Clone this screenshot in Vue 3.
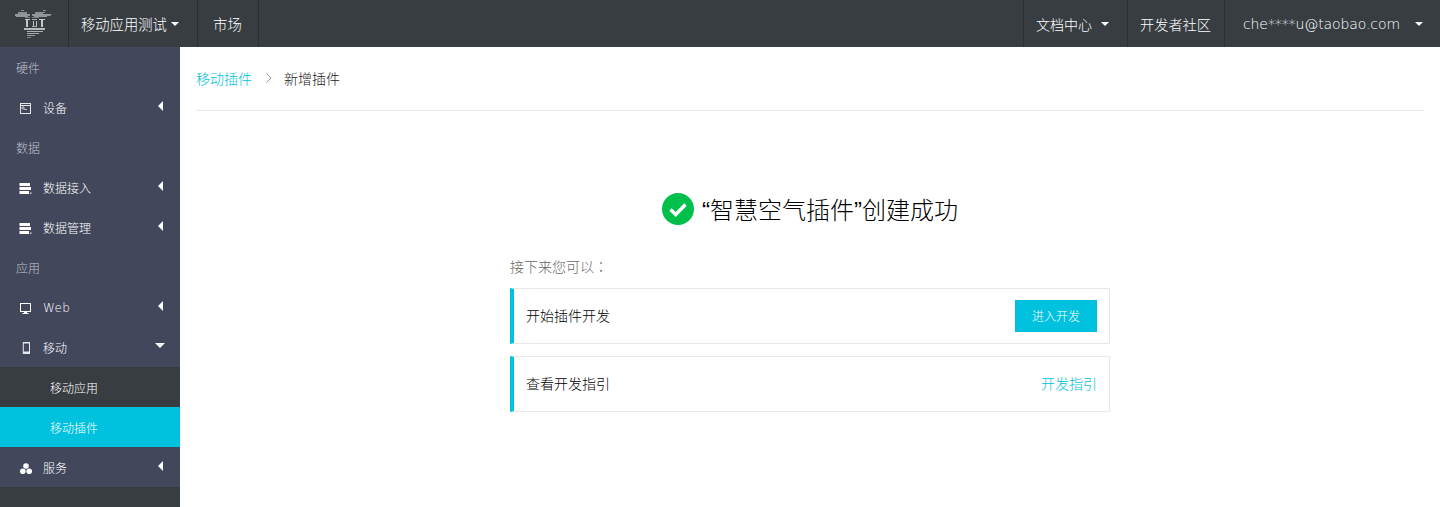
<script setup>
const topLeft = [
  { label: '移动应用测试', caret: true, cls: 'w-app' },
  { label: '市场', caret: false, cls: 'w-market' }
]
const menu = [
  { type: 'head', label: '硬件' },
  { type: 'item', label: '设备', icon: 'term' },
  { type: 'head', label: '数据' },
  { type: 'item', label: '数据接入', icon: 'data' },
  { type: 'item', label: '数据管理', icon: 'data' },
  { type: 'head', label: '应用' },
  { type: 'item', label: 'Web', icon: 'web' },
  { type: 'item', label: '移动', icon: 'phone', open: true },
  { type: 'sub', label: '移动应用' },
  { type: 'sub', label: '移动插件', active: true },
  { type: 'item', label: '服务', icon: 'cubes' }
]
</script>

<template>
  <div class="page">
    <header class="topbar">
      <div class="logo-cell">
        <svg class="logo" width="38" height="28" viewBox="0 0 38 28" fill="#c4c6c6">
          <rect x="6" y="0" width="3" height="1" opacity=".6"/><rect x="28" y="0" width="3" height="1" opacity=".6"/>
          <path d="M3 2h9v2H3zM20 2h10v1h-2v1h-8z" opacity=".6"/>
          <path d="M0 4h15v2h-2v1H1v-1H0zM17 4h20l-2 2h-3v1H19v-1h-2z" opacity=".65"/>
          <path d="M10 7h5v1h-5zM17 7h7v1h-7z" opacity=".5"/>
          <rect x="10" y="9" width="5" height="1"/><rect x="17" y="9" width="5" height="1" opacity=".8"/><rect x="24" y="9" width="6" height="1"/>
          <rect x="11" y="10" width="2" height="7"/><rect x="18" y="11" width="1" height="5"/><rect x="21" y="11" width="1" height="5"/><rect x="26" y="10" width="2" height="7"/>
          <rect x="17" y="16" width="5" height="1" opacity=".8"/>
          <rect x="9" y="18" width="21" height="2" opacity=".9"/>
          <rect x="12" y="21" width="16" height="1" opacity=".85"/>
          <rect x="12" y="23" width="12" height="1" opacity=".8"/>
          <rect x="12" y="25" width="8" height="1" opacity=".7"/>
          <rect x="12" y="27" width="4" height="1" opacity=".5"/>
        </svg>
      </div>
      <a v-for="t in topLeft" :key="t.label" class="nav-cell" :class="t.cls">
        {{ t.label }}<i v-if="t.caret" class="caret caret-near"></i>
      </a>
      <div class="spacer"></div>
      <a class="nav-cell w-docs">文档中心<i class="caret caret-docs"></i></a>
      <a class="nav-cell w-dev">开发者社区</a>
      <a class="nav-cell w-user"><span class="email">che****u@taobao.com</span><i class="caret caret-user"></i></a>
    </header>

    <div class="body">
      <aside class="sidebar">
        <template v-for="m in menu" :key="m.label">
          <div v-if="m.type === 'head'" class="menu-head">{{ m.label }}</div>
          <div v-else-if="m.type === 'item'" class="menu-item">
            <span class="menu-icon">
              <svg v-if="m.icon === 'term'" width="14" height="14" viewBox="0 0 14 14" fill="none" stroke="#e8e8ec">
                <rect x="1.500" y="3.500" width="10" height="10" />
                <path d="M1.500 5.500h10"/>
                <path d="M3 7h2v2H3zM5 9.500h3" stroke-width=".7"/>
              </svg>
              <svg v-else-if="m.icon === 'data'" width="14" height="14" viewBox="0 0 14 14" fill="#fff">
                <rect x="0.500" y="3" width="10.500" height="3"/>
                <rect x="0.500" y="7" width="11.500" height="3"/>
                <rect x="0.500" y="11" width="9.500" height="3"/>
                <rect x="11" y="12.500" width="1.500" height="1.500" opacity=".8"/>
              </svg>
              <svg v-else-if="m.icon === 'web'" width="14" height="14" viewBox="0 0 14 14" fill="#fff">
                <path d="M1 3h11v9H8v1h1.500v1h-6v-1H5v-1H1zM2 4v7h9V4z" fill-rule="evenodd"/>
              </svg>
              <svg v-else-if="m.icon === 'phone'" width="14" height="14" viewBox="0 0 14 14" fill="#e8e8ec">
                <path d="M3.800 2H11v12.300H3.800zM4.800 3.500v8h5.200v-8z" fill-rule="evenodd"/>
              </svg>
              <svg v-else width="14" height="14" viewBox="0 0 14 14" fill="#fff">
                <circle cx="7" cy="6" r="2.800"/><circle cx="3.800" cy="11.200" r="2.800"/><circle cx="10.200" cy="11.200" r="2.800"/>
              </svg>
            </span>
            <span class="menu-label" :class="{ latin: m.label === 'Web' }">{{ m.label }}</span>
            <i class="arrow" :class="m.open ? 'arrow-down' : 'arrow-left'"></i>
          </div>
          <div v-else class="menu-sub" :class="{ active: m.active }">{{ m.label }}</div>
        </template>
      </aside>

      <main class="content">
        <nav class="crumbs">
          <a class="crumb-link">移动插件</a>
          <svg class="crumb-sep" width="8" height="10" viewBox="0 0 8 10" fill="none" stroke="#999"><path d="M1.500 0.500l4.500 4.500-4.500 4.500"/></svg>
          <span class="crumb-now">新增插件</span>
        </nav>

        <section class="result">
          <h1 class="title">
            <svg width="32" height="32" viewBox="0 0 32 32">
              <circle cx="16" cy="16" r="16" fill="#00c04b"/>
              <path d="M8.500 16.500l5.200 5 9.800-10" fill="none" stroke="#fff" stroke-width="3.400"/>
            </svg>
            <span>“智慧空气插件”创建成功</span>
          </h1>
          <div class="next">
            <p class="hint">接下来您可以<span class="colon">：</span></p>
            <div class="card">
              <span class="card-text">开始插件开发</span>
              <button class="btn">进入开发</button>
            </div>
            <div class="card">
              <span class="card-text">查看开发指引</span>
              <a class="link">开发指引</a>
            </div>
          </div>
        </section>
      </main>
    </div>
  </div>
</template>

<style>
html, body { margin: 0; background: #fff; }
</style>

<style scoped>
.page {
  width: 1440px;
  height: 507px;
  overflow: hidden;
  font-family: "Noto Sans CJK SC", "DejaVu Sans", sans-serif;
  font-size: 12px;
  font-weight: 300;
  color: #333;
  display: flex;
  flex-direction: column;
}
.topbar {
  height: 47px;
  flex: none;
  background: #373d41;
  display: flex;
  color: #fff;
  font-size: 14px;
}
.logo-cell { width: 68px; flex: none; display: flex; align-items: center; padding-left: 15px; box-sizing: border-box; }
.logo { display: block; margin-top: 1px; }
.nav-cell {
  flex: none;
  box-sizing: border-box;
  height: 47px;
  display: flex;
  align-items: center;
  border-left: 1px solid #2a2f32;
  color: #fff;
}
.w-app { width: 129px; padding-left: 12px; font-size: 14.300px; }
.w-market { width: 62px; padding-left: 15px; border-right: 1px solid #2a2f32; font-size: 14.400px; }
.w-docs { width: 104px; padding-left: 12px; }
.w-dev { width: 97px; padding-left: 12px; font-size: 14.200px; }
.w-user { width: 216px; padding-left: 18px; }
.email { font-family: "DejaVu Sans", sans-serif; font-weight: 300; font-size: 14px; letter-spacing: -0.100px; }
.spacer { flex: 1; }
.caret {
  display: block;
  width: 0;
  height: 0;
  border-left: 4px solid transparent;
  border-right: 4px solid transparent;
  border-top: 4px solid #fff;
}
.caret-near { margin-left: 4px; }
.caret-docs { margin-left: 9px; }
.caret-user { margin-left: 15px; }

.body { flex: 1; display: flex; min-height: 0; }
.sidebar { width: 180px; flex: none; background: #373d41; }
.menu-head, .menu-item {
  height: 40px;
  background: #42475c;
  display: flex;
  align-items: center;
  box-sizing: border-box;
}
.menu-head { padding-left: 16px; color: #bfc1c8; }
.menu-item { padding-left: 19px; color: #fff; }
.menu-icon { width: 14px; height: 14px; display: block; margin-right: 10px; }
.menu-icon svg { display: block; }
.menu-label { flex: 1; }
.latin { font-family: "DejaVu Sans", sans-serif; font-weight: 300; letter-spacing: 0.300px; padding-top: 1px; }
.arrow { display: block; width: 0; height: 0; }
.arrow-left {
  margin-right: 17px;
  margin-top: -3px;
  border-top: 5px solid transparent;
  border-bottom: 5px solid transparent;
  border-right: 5px solid #fff;
}
.arrow-down {
  margin-right: 15px;
  margin-top: -3px;
  border-left: 5px solid transparent;
  border-right: 5px solid transparent;
  border-top: 5px solid #fff;
}
.menu-sub {
  height: 40px;
  background: #373d41;
  color: #fff;
  display: flex;
  align-items: center;
  padding-left: 50px;
}
.menu-sub.active { background: #00c1de; }

.content { flex: 1; padding: 0 16px; min-width: 0; }
.crumbs {
  height: 61px;
  padding-bottom: 2px;
  border-bottom: 1px solid #e8e8e8;
  display: flex;
  align-items: center;
  font-size: 14px;
}
.crumb-link { color: #00c1de; }
.crumb-sep { margin: 0 11px 0 13px; }
.crumb-now { color: #222; }
.result { display: flex; flex-direction: column; align-items: center; }
.title {
  margin: 82px 0 0;
  height: 32px;
  display: flex;
  align-items: center;
  gap: 8px;
  font-family: "Liberation Sans", "Noto Sans CJK SC", sans-serif;
  font-size: 24px;
  font-weight: 300;
  color: #000;
}
.title svg { display: block; }
.title span { padding-bottom: 2px; }
.next { width: 600px; margin-top: 31px; }
.hint { margin: 0 0 12px; height: 20px; line-height: 20px; font-size: 14px; color: #666; }
.colon { font-family: "Noto Sans CJK TC", sans-serif; }
.card {
  height: 56px;
  box-sizing: border-box;
  border: 1px solid #e8e8e8;
  border-left: 4px solid #00c1de;
  margin-bottom: 12px;
  padding: 0 12px;
  display: flex;
  align-items: center;
  justify-content: space-between;
  font-size: 14px;
  color: #000;
}
.card-text { padding-bottom: 2px; }
.btn {
  width: 82px;
  height: 32px;
  border: 0;
  padding: 0 0 2px;
  background: #00c1de;
  color: #fff;
  font: inherit;
  font-size: 12px;
}
.link { color: #00c1de; font-size: 14px; padding-bottom: 2px; }
</style>
